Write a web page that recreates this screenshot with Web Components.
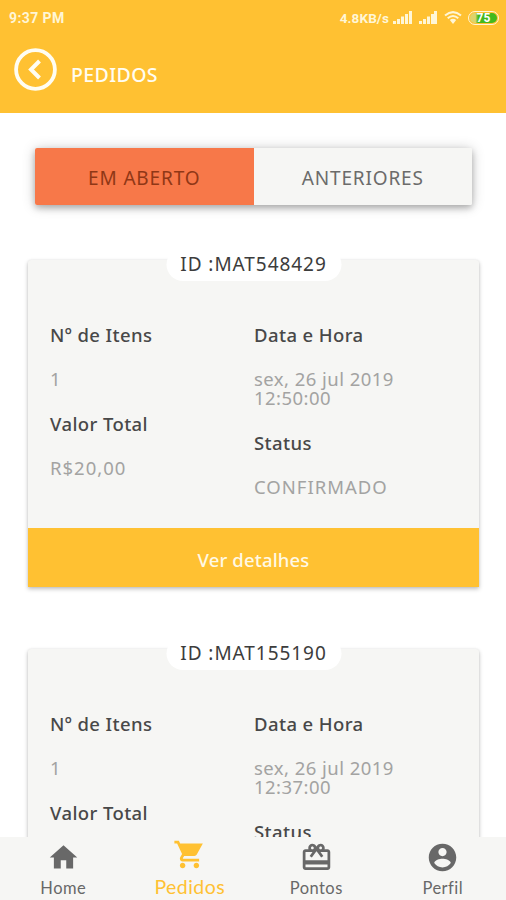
<!DOCTYPE html>
<html lang="pt-BR">
<head>
<meta charset="utf-8">
<title>Pedidos</title>
<style>
  html, body { margin: 0; height: 100%; }
  body {
    --color-primary: #ffc132;
    --color-active: #f77849;
    --color-surface: #f6f6f4;
    --color-text: #484848;
    --color-muted: #a3a3a2;
    overflow: hidden;
    background: #fff;
    color: var(--color-text);
    font-family: "Noto Sans", "Open Sans", sans-serif;
  }
</style>
</head>
<body>
<orders-app></orders-app>
<script>
function define(name, html, setup) {
  const template = document.createElement("template");
  template.innerHTML = html;
  customElements.define(name, class extends HTMLElement {
    constructor() {
      super();
      this.attachShadow({ mode: "open" });
      this.shadowRoot.appendChild(template.content.cloneNode(true));
    }

    connectedCallback() {
      if (setup) setup(this, this.shadowRoot);
    }
  });
}

const ICONS = {
  home: "M10 20v-6h4v6h5v-8h3L12 3 2 12h3v8z",
  cart: "M7 18c-1.1 0-1.99.9-1.99 2S5.9 22 7 22s2-.9 2-2-.9-2-2-2zM1 2v2h2l3.6 7.59-1.35 2.45c-.16.28-.25.61-.25.96 0 1.1.9 2 2 2h12v-2H7.42c-.14 0-.25-.11-.25-.25l.03-.12.9-1.63h7.45c.75 0 1.41-.41 1.75-1.03L21.7 4H5.21l-.94-2H1zm16 16c-1.1 0-1.99.9-1.99 2s.89 2 1.99 2 2-.9 2-2-.9-2-2-2z",
  gift: "M20 6h-2.18c.11-.31.18-.65.18-1 0-1.66-1.34-3-3-3-1.05 0-1.96.54-2.5 1.35l-.5.67-.5-.68C10.96 2.54 10.05 2 9 2 7.34 2 6 3.34 6 5c0 .35.07.69.18 1H4c-1.11 0-1.99.89-1.99 2L2 19c0 1.11.89 2 2 2h16c1.11 0 2-.89 2-2V8c0-1.11-.89-2-2-2zm-5-2c.55 0 1 .45 1 1s-.45 1-1 1-1-.45-1-1 .45-1 1-1zM9 4c.55 0 1 .45 1 1s-.45 1-1 1-1-.45-1-1 .45-1 1-1zm11 15H4v-2h16v2zm0-5H4V8h5.08L7 10.83 8.62 12 11 8.76l1-1.36 1 1.36L15.38 12 17 10.83 14.92 8H20v6z",
  person: "M12 2C6.48 2 2 6.48 2 12s4.48 10 10 10 10-4.48 10-10S17.52 2 12 2zm0 3c1.66 0 3 1.34 3 3s-1.34 3-3 3-3-1.340-3-3 1.340-3 3-3zm0 14.200c-2.500 0-4.710-1.280-6-3.220.03-1.990 4-3.080 6-3.080 1.990 0 5.970 1.090 6 3.080-1.290 1.940-3.500 3.220-6 3.220z",
};

define("status-bar", `
<style>
  :host { display: flex; align-items: center; height: 35px; padding: 0 7px 0 9px; color: #fff6d6; font: 700 14px/18px Roboto, sans-serif; }
  .time { flex: 1; letter-spacing: 0.4px; }
  .speed { margin-right: 4px; font-size: 13.5px; letter-spacing: 0.1px; }
  svg { display: block; fill: currentColor; }
  .signal { margin-right: 7px; }
  .wifi { margin-right: 6px; }
  .battery { box-sizing: border-box; width: 31px; height: 14px; padding: 1px; border: 1.5px solid #fff6d6; border-radius: 7px; }
  .level { height: 100%; border-radius: 5px; background: linear-gradient(90deg, #ded36a 0 20%, #43b91d 30%); color: #fff; font-size: 12px; line-height: 11px; text-align: center; }
</style>
<span class="time">9:37 PM</span>
<span class="speed">4.8KB/s</span>
<svg class="signal" width="19" height="13"><path d="M0 10h3v3H0zM4 8h3v5H4zM8 5.500h3V13H8zM12 3h3v10h-3zM16 0h3v13h-3z"/></svg>
<svg class="signal" width="18" height="13"><path d="M0 10h3v3H0zM4 8h3v5H4zM8 5.500h3V13H8zM12 3h3v10h-3zM15 0h3v13h-3z"/></svg>
<svg class="wifi" width="18" height="13" viewBox="0 0 18 13">
  <g fill="none" stroke="currentColor" stroke-width="2"><path d="M1 4.500Q9-2.300 17 4.500M3.700 7.300Q9 2.800 14.300 7.300"/></g>
  <path d="M5.800 9Q9 6.300 12.200 9L9 13z"/>
</svg>
<div class="battery"><div class="level">75</div></div>
`);

define("page-header", `
<style>
  :host { display: block; height: 113px; background: var(--color-primary); }
  .bar { display: flex; align-items: flex-start; padding: 13px 0 0 14px; gap: 14px; color: #fffdf2; }
  svg { display: block; }
  .title { margin-top: 14px; font-size: 19.5px; line-height: 26px; font-weight: 500; letter-spacing: 0.4px; }
</style>
<status-bar></status-bar>
<div class="bar">
  <svg width="43" height="43" viewBox="0 0 43 43" fill="none" stroke="currentColor">
    <circle cx="21.500" cy="21.500" r="19.400" stroke-width="3.800"/>
    <path d="M25.500 13 17 21.500l8.500 8.500" stroke-width="4"/>
  </svg>
  <span class="title"><slot></slot></span>
</div>
`);

define("order-tabs", `
<style>
  :host { display: grid; grid-template-columns: 1fr 1fr; height: 57px; margin: 35px 34px 0 35px; border-radius: 2px; box-shadow: 0 3px 6px rgba(0,0,0,.24), 0 1px 14px rgba(0,0,0,.2); font-size: 19px; letter-spacing: 0.85px; }
  div { display: flex; align-items: center; justify-content: center; padding-top: 3px; background: var(--color-surface); color: #6b6b6a; border-radius: 0 2px 2px 0; }
  .active { background: var(--color-active); color: #8f3716; border-radius: 2px 0 0 2px; }
</style>
<div class="active"><slot name="open"></slot></div>
<div><slot name="past"></slot></div>
`);

define("order-field", `
<style>
  :host { display: grid; row-gap: 25.5px; font-size: 18.5px; line-height: 19px; }
  .label { font-weight: 500; letter-spacing: 0.4px; }
  .value { color: var(--color-muted); letter-spacing: 0.45px; white-space: pre-line; }
  :host(.total) .value, :host(.status) .value { letter-spacing: 1px; }
</style>
<div class="label"></div>
<div class="value"><slot></slot></div>
`, (host, root) => {
  root.querySelector(".label").textContent = host.getAttribute("label");
});

define("order-card", `
<style>
  :host { display: block; position: relative; margin: 0 27px 62px 28px; border-radius: 3px 3px 0 0; background: var(--color-surface); box-shadow: 0 2px 4px rgba(0,0,0,.25), 0 0 2px rgba(0,0,0,.08); }
  .id { position: absolute; top: -12px; left: 50%; transform: translateX(-50%); box-sizing: border-box; width: 175px; height: 33px; border-radius: 17px; background: #fff; color: #3c3c3c; font-size: 19px; line-height: 33px; letter-spacing: 0.95px; text-align: center; white-space: nowrap; }
  .fields { display: grid; grid-template-columns: 204px 1fr; height: 171.5px; padding: 64.5px 22px 32px; }
  .column { display: flex; flex-direction: column; gap: 25.5px; }
  .details { height: 59px; background: var(--color-primary); color: #fff9e5; font-size: 18.5px; line-height: 64px; font-weight: 500; letter-spacing: 0.15px; text-align: center; }
</style>
<div class="id"></div>
<div class="fields">
  <div class="column">
    <order-field label="Nº de Itens">1</order-field>
    <order-field label="Valor Total" class="total"></order-field>
  </div>
  <div class="column">
    <order-field label="Data e Hora" class="date"></order-field>
    <order-field label="Status" class="status"></order-field>
  </div>
</div>
<div class="details"><slot></slot></div>
`, (host, root) => {
  root.querySelector(".id").textContent = "ID :" + host.getAttribute("order-id");
  for (const key of ["total", "date", "status"]) {
    const value = host.getAttribute(key) || "";
    root.querySelector("." + key).textContent = value.replace("T", "\n");
  }
});

define("nav-item", `
<style>
  :host { display: flex; flex-direction: column; align-items: center; padding-top: 4px; color: #686868; font-family: Lato, sans-serif; font-size: 16.5px; }
  svg { display: block; width: 33px; height: 33px; fill: currentColor; }
  .label { margin-top: 3px; line-height: 22px; letter-spacing: .45px; }
  :host([active]) { padding-top: 1px; color: var(--color-primary); font-size: 19.5px; }
  :host([active]) .label { margin-top: 5px; }
</style>
<svg viewBox="0 0 24 24"><path/></svg>
<div class="label"><slot></slot></div>
`, (host, root) => {
  root.querySelector("path").setAttribute("d", ICONS[host.getAttribute("icon")]);
});

define("bottom-nav", `
<style>
  :host { display: grid; grid-template-columns: repeat(4, 1fr); flex: none; height: 63px; background: var(--color-surface); }
</style>
<slot></slot>
`);

define("orders-app", `
<style>
  :host { display: flex; flex-direction: column; height: 100vh; }
  main { flex: 1; min-height: 0; overflow: hidden; }
  page-header { flex: none; }
  .list { margin-top: 55px; }
</style>
<page-header>PEDIDOS</page-header>
<main>
  <order-tabs><span slot="open">EM ABERTO</span><span slot="past">ANTERIORES</span></order-tabs>
  <div class="list">
    <order-card order-id="MAT548429" total="R$20,00" date="sex, 26 jul 2019T12:50:00" status="CONFIRMADO">Ver detalhes</order-card>
    <order-card order-id="MAT155190" date="sex, 26 jul 2019T12:37:00"></order-card>
  </div>
</main>
<bottom-nav>
  <nav-item icon="home">Home</nav-item>
  <nav-item icon="cart" active>Pedidos</nav-item>
  <nav-item icon="gift">Pontos</nav-item>
  <nav-item icon="person">Perfil</nav-item>
</bottom-nav>
`);
</script>
</body>
</html>
